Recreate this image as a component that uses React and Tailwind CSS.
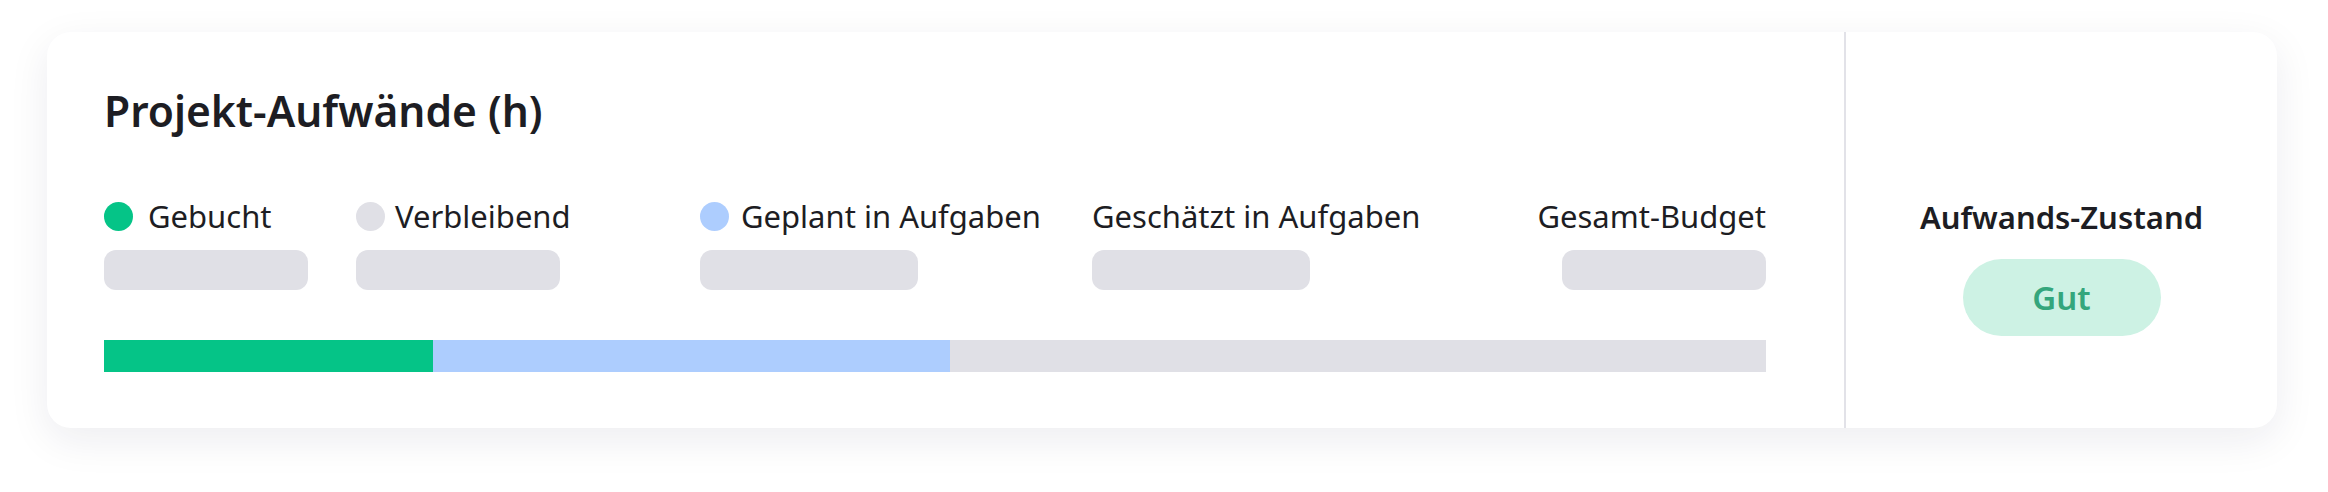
export default function App() {
  const legend = [
    { label: "Gebucht", dot: "bg-[#05c487]", gap: "gap-[15px]", col: "w-[204px]", bar: "w-[204px]" },
    { label: "Verbleibend", dot: "bg-[#e0e0e6]", gap: "gap-[10px]", col: "w-[296px]", bar: "w-[204px]" },
    { label: "Geplant in Aufgaben", dot: "bg-[#adcdfe]", gap: "gap-[12px]", col: "w-[344px]", bar: "w-[218px]" },
    { label: "Geschätzt in Aufgaben", dot: null, col: "w-[330px]", bar: "w-[218px]" },
  ];

  return (
    <div
      className="min-h-screen bg-white pt-[32px] pl-[47px] text-[#1d1d23]"
      style={{ fontFamily: "'Noto Sans', 'Open Sans', sans-serif" }}
    >
      {/* ================= CARD ================= */}
      <div className="flex w-[2230px] rounded-[24px] bg-white shadow-[0_12px_40px_rgba(30,30,70,0.08)]">

        {/* LEFT: EFFORTS */}
        <div className="flex-1 pl-[57px] pr-[78px] pt-[58px] pb-[56px]">
          <h1 className="text-[42.5px] font-semibold leading-[42px]">Projekt-Aufwände (h)</h1>

          <div className="mt-[69px] flex gap-[48px]">
            {legend.map((item) => (
              <div key={item.label} className={`${item.col} flex flex-col`}>
                <div className={`flex h-[30px] items-center ${item.gap ?? ""}`}>
                  {item.dot && <span className={`h-[29px] w-[29px] shrink-0 rounded-full ${item.dot}`}></span>}
                  <span className="text-[31px] leading-none whitespace-nowrap">{item.label}</span>
                </div>
                <div className={`mt-[19px] h-[40px] rounded-[12px] bg-[#e0e0e6] ${item.bar}`}></div>
              </div>
            ))}
            <div className="flex flex-1 flex-col items-end">
              <div className="flex h-[30px] items-center">
                <span className="text-[31px] leading-none whitespace-nowrap">Gesamt-Budget</span>
              </div>
              <div className="mt-[19px] h-[40px] w-[204px] rounded-[12px] bg-[#e0e0e6]"></div>
            </div>
          </div>

          {/* PROGRESS BAR */}
          <div className="mt-[50px] flex h-[32px] w-full bg-[#e0e0e6]">
            <div className="h-full w-[329px] bg-[#05c487]"></div>
            <div className="h-full w-[517px] bg-[#adcdfe]"></div>
          </div>
        </div>

        {/* RIGHT: STATUS */}
        <div className="flex w-[433px] flex-col items-center border-l-2 border-[#e2e2e8] pt-[170px]">
          <h2 className="text-[31px] font-semibold leading-[30px]">Aufwands-Zustand</h2>
          <div className="mt-[27px] flex h-[77px] w-[198px] items-center justify-center rounded-full bg-[#cdf2e4]">
            <span className="text-[33px] font-semibold leading-none text-[#34a67c]">Gut</span>
          </div>
        </div>
      </div>
    </div>
  );
}
